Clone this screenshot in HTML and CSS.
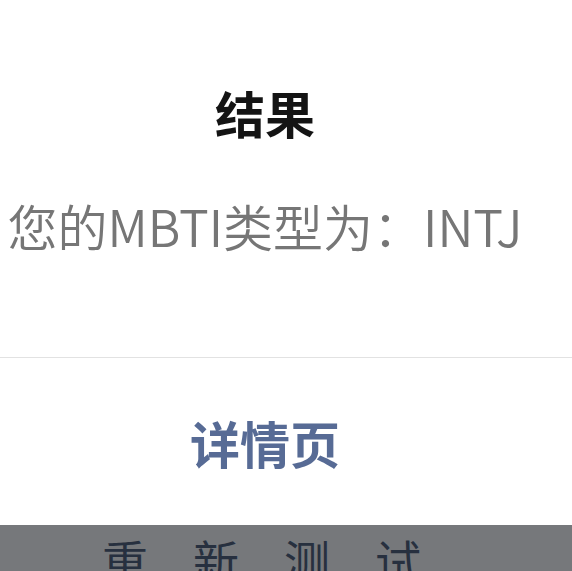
FILE: index.html
```html
<!DOCTYPE html>
<html lang="zh-CN">
<head>
<meta charset="utf-8">
<title>结果</title>
<link rel="stylesheet" href="styles.css">
</head>
<body>
<div class="modal">
  <div class="modal-body">
    <div class="modal-title">结果</div>
    <div class="modal-content">您的MBTI类型为：INTJ</div>
  </div>
  <div class="modal-footer">
    <div class="modal-btn">详情页</div>
  </div>
</div>
<div class="behind">
  <span class="behind-text">重新测试</span>
</div>
</body>
</html>
```
FILE: styles.css
```css
html, body {
  margin: 0;
  padding: 0;
  background: #ffffff;
  overflow: hidden;
}
body {
  width: 572px;
  height: 571px;
  font-family: "Noto Sans CJK SC", "Noto Sans", sans-serif;
}
.modal {
  background: #ffffff;
}
.modal-body {
  padding: 77px 42px 97px 0;
  text-align: center;
}
.modal-title {
  font-size: 50px;
  line-height: 70px;
  font-weight: 700;
  color: #141414;
}
.modal-content {
  margin-top: 43px;
  font-size: 50px;
  line-height: 70px;
  font-weight: 350;
  color: #767676;
  white-space: nowrap;
}
.modal-footer {
  border-top: 1px solid #e2e2e2;
  height: 167px;
  display: flex;
  align-items: center;
  justify-content: center;
  padding-right: 42px;
}
.modal-btn {
  font-size: 50px;
  line-height: 70px;
  font-weight: 700;
  color: #576b95;
}
.behind {
  background: #76787b;
  height: 60px;
  padding: 4px 0 0 102px;
  overflow: hidden;
}
.behind-text {
  font-size: 46px;
  line-height: 60px;
  letter-spacing: 45px;
  color: #27303f;
  white-space: nowrap;
}
```
